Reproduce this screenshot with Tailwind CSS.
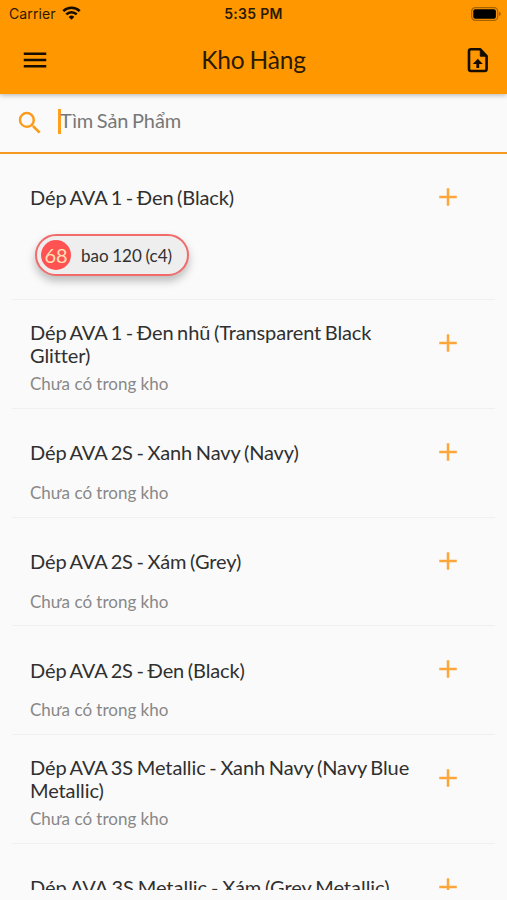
<!DOCTYPE html>
<html lang="vi">
<head>
    <meta charset="UTF-8">
    <meta name="viewport" content="width=device-width, initial-scale=1.0">
    <title>Kho Hàng</title>
    <script src="https://cdn.jsdelivr.net/npm/@tailwindcss/browser@4"></script>
</head>
<body class="bg-[#fafafa] font-['Lato','Noto_Sans',sans-serif] text-[#303030]">
    <svg class="hidden">
        <symbol id="plus" viewBox="0 0 24 24"><path d="M19 13h-6v6h-2v-6H5v-2h6V5h2v6h6z"/></symbol>
    </svg>
    <div class="w-[507px] h-[900px] overflow-hidden">
        <header class="relative h-[94px] bg-[#ff9800] shadow-[0_1px_5px_rgba(0,0,0,0.3)] text-[#2b1a00]">
            <div class="h-[27px] px-[9px] grid grid-cols-3 items-center font-['Inter',sans-serif]">
                <div class="flex items-center gap-[6px] text-[14px] tracking-[0.1px]">
                    <span>Carrier</span>
                    <svg class="w-[19px] h-[14px] mb-px" viewBox="0 0 19 14" fill="none" stroke="#160d00" stroke-width="2.7">
                        <path d="M1.3 5.1a11.7 11.7 0 0 1 16.4 0"/>
                        <path d="M4.3 8.4a7.4 7.4 0 0 1 10.4 0"/>
                        <path d="M9.5 13.7L6.7 10.9a4 4 0 0 1 5.6 0z" fill="#160d00" stroke="none"/>
                    </svg>
                </div>
                <span class="text-center text-[14px] font-semibold tracking-[0.3px]">5:35 PM</span>
                <svg class="justify-self-end w-[30px] h-[14px] -mr-[3px]" viewBox="0 0 30 14">
                    <rect x=".7" y=".7" width="26" height="12.6" rx="3.6" fill="none" stroke="#a56200" stroke-width="1.2"/>
                    <rect x="2.3" y="2.3" width="22.6" height="9.4" rx="2" fill="#000"/>
                    <path d="M28 4.8q1.8.6 1.8 2.2T28 9.2z" fill="#a56200"/>
                </svg>
            </div>
            <div class="h-[65px] pl-5 pr-[13px] flex items-center justify-between">
                <svg class="w-[30px] h-[30px]" viewBox="0 0 24 24" fill="#160d00"><path d="M3 18h18v-2H3v2zm0-5h18v-2H3v2zm0-7v2h18V6H3z"/></svg>
                <h1 class="text-[24.5px] leading-[30px] mr-[5px] tracking-[-0.2px] [word-spacing:-1px]">Kho Hàng</h1>
                <svg class="w-8 h-8" viewBox="0 0 32 32" fill="none" stroke="#160d00" stroke-width="2.6" stroke-linejoin="round">
                    <path d="M9 5.3h9.3l6.3 6.8V25a2 2 0 0 1-2 2H9a2 2 0 0 1-2-2V7.3a2 2 0 0 1 2-2z"/>
                    <path d="M18.3 5.3v6.9h6.3z" fill="#160d00" stroke-width="1"/>
                    <path d="M15.8 14.8l5 5.2h-3.6v4h-2.8v-4h-3.6z" fill="#160d00" stroke="none"/>
                </svg>
            </div>
        </header>

        <label class="h-[60px] border-b-2 border-[#f69a20] flex items-center pl-[15px]">
            <svg class="w-[30px] h-[30px]" viewBox="0 0 24 24" fill="#f99c1c"><path d="M15.5 14h-.79l-.28-.27A6.47 6.47 0 0 0 16 9.5 6.5 6.5 0 1 0 9.5 16c1.61 0 3.09-.59 4.23-1.57l.27.28v.79l5 4.99L20.49 19l-4.99-5zm-6 0C7.01 14 5 11.99 5 9.5S7.01 5 9.5 5 14 7.01 14 9.5 11.99 14 9.5 14z"/></svg>
            <span class="ml-[13px] w-[3px] h-[25px] mb-1 bg-[#ff9f1c]"></span>
            <span class="text-[20px] leading-6 mb-[6px] -ml-px text-[#777] tracking-[-0.12px] [word-spacing:-1.3px]">Tìm Sản Phẩm</span>
        </label>

        <main class="h-[736px] overflow-hidden">
            <div class="mx-3 h-[146px] pl-[18px] pt-[13px] flex border-b border-[#f0f0f0]">
                <div class="w-[390px]">
                    <h2 class="h-[60px] flex items-center text-[20px] leading-[23px] tracking-[-0.12px] [word-spacing:-1.3px]">Dép AVA 1 - Đen (Black)</h2>
                    <div class="ml-[5px] mt-[7px] w-[154px] h-[42px] pl-[4px] flex items-center gap-[10px] rounded-full border-2 border-[#f26a6a] bg-[#eee] shadow-[0_5px_8px_rgba(0,0,0,0.25)]">
                        <span class="w-[30px] h-[30px] rounded-full bg-[#ff5252] text-[#ffe0b2] text-[20px] leading-[31px] text-center">68</span>
                        <span class="text-[17px] leading-5 pt-px whitespace-nowrap [word-spacing:-0.7px]">bao 120 (c4)</span>
                    </div>
                </div>
                <svg class="w-[30px] h-[30px] mt-[15px] ml-[13px]" fill="#ffa63a"><use href="#plus"/></svg>
            </div>
            <div class="mx-3 h-[108.8px] pl-[18px] pt-[14px] flex border-b border-[#f0f0f0]">
                <div class="w-[390px]">
                    <h2 class="h-[60px] flex items-center text-[20px] leading-[23px] tracking-[-0.12px] [word-spacing:-1.3px]">Dép AVA 1 - Đen nhũ (Transparent Black Glitter)</h2>
                    <p class="text-[17px] leading-5 text-[#888]">Chưa có trong kho</p>
                </div>
                <svg class="w-[30px] h-[30px] mt-[14px] ml-[13px]" fill="#ffa63a"><use href="#plus"/></svg>
            </div>
            <div class="mx-3 h-[108.8px] pl-[18px] pt-[14px] flex border-b border-[#f0f0f0]">
                <div class="w-[390px]">
                    <h2 class="h-[60px] flex items-center text-[20px] leading-[23px] tracking-[-0.12px] [word-spacing:-1.3px]">Dép AVA 2S - Xanh Navy (Navy)</h2>
                    <p class="text-[17px] leading-5 text-[#888]">Chưa có trong kho</p>
                </div>
                <svg class="w-[30px] h-[30px] mt-[14px] ml-[13px]" fill="#ffa63a"><use href="#plus"/></svg>
            </div>
            <div class="mx-3 h-[108.8px] pl-[18px] pt-[14px] flex border-b border-[#f0f0f0]">
                <div class="w-[390px]">
                    <h2 class="h-[60px] flex items-center text-[20px] leading-[23px] tracking-[-0.12px] [word-spacing:-1.3px]">Dép AVA 2S - Xám (Grey)</h2>
                    <p class="text-[17px] leading-5 text-[#888]">Chưa có trong kho</p>
                </div>
                <svg class="w-[30px] h-[30px] mt-[14px] ml-[13px]" fill="#ffa63a"><use href="#plus"/></svg>
            </div>
            <div class="mx-3 h-[108.8px] pl-[18px] pt-[14px] flex border-b border-[#f0f0f0]">
                <div class="w-[390px]">
                    <h2 class="h-[60px] flex items-center text-[20px] leading-[23px] tracking-[-0.12px] [word-spacing:-1.3px]">Dép AVA 2S - Đen (Black)</h2>
                    <p class="text-[17px] leading-5 text-[#888]">Chưa có trong kho</p>
                </div>
                <svg class="w-[30px] h-[30px] mt-[14px] ml-[13px]" fill="#ffa63a"><use href="#plus"/></svg>
            </div>
            <div class="mx-3 h-[108.8px] pl-[18px] pt-[14px] flex border-b border-[#f0f0f0]">
                <div class="w-[390px]">
                    <h2 class="h-[60px] flex items-center text-[20px] leading-[23px] tracking-[-0.1px] [word-spacing:-1.3px]">Dép AVA 3S Metallic - Xanh Navy (Navy Blue Metallic)</h2>
                    <p class="text-[17px] leading-5 text-[#888]">Chưa có trong kho</p>
                </div>
                <svg class="w-[30px] h-[30px] mt-[14px] ml-[13px]" fill="#ffa63a"><use href="#plus"/></svg>
            </div>
            <div class="mx-3 h-[108.8px] pl-[18px] pt-[14px] flex">
                <div class="w-[390px]">
                    <h2 class="h-[60px] flex items-center text-[20px] leading-[23px] tracking-[-0.02px] [word-spacing:-1.3px]">Dép AVA 3S Metallic - Xám (Grey Metallic)</h2>
                </div>
                <svg class="w-[30px] h-[30px] mt-[14px] ml-[13px]" fill="#ffa63a"><use href="#plus"/></svg>
            </div>
        </main>
    </div>
</body>
</html>
